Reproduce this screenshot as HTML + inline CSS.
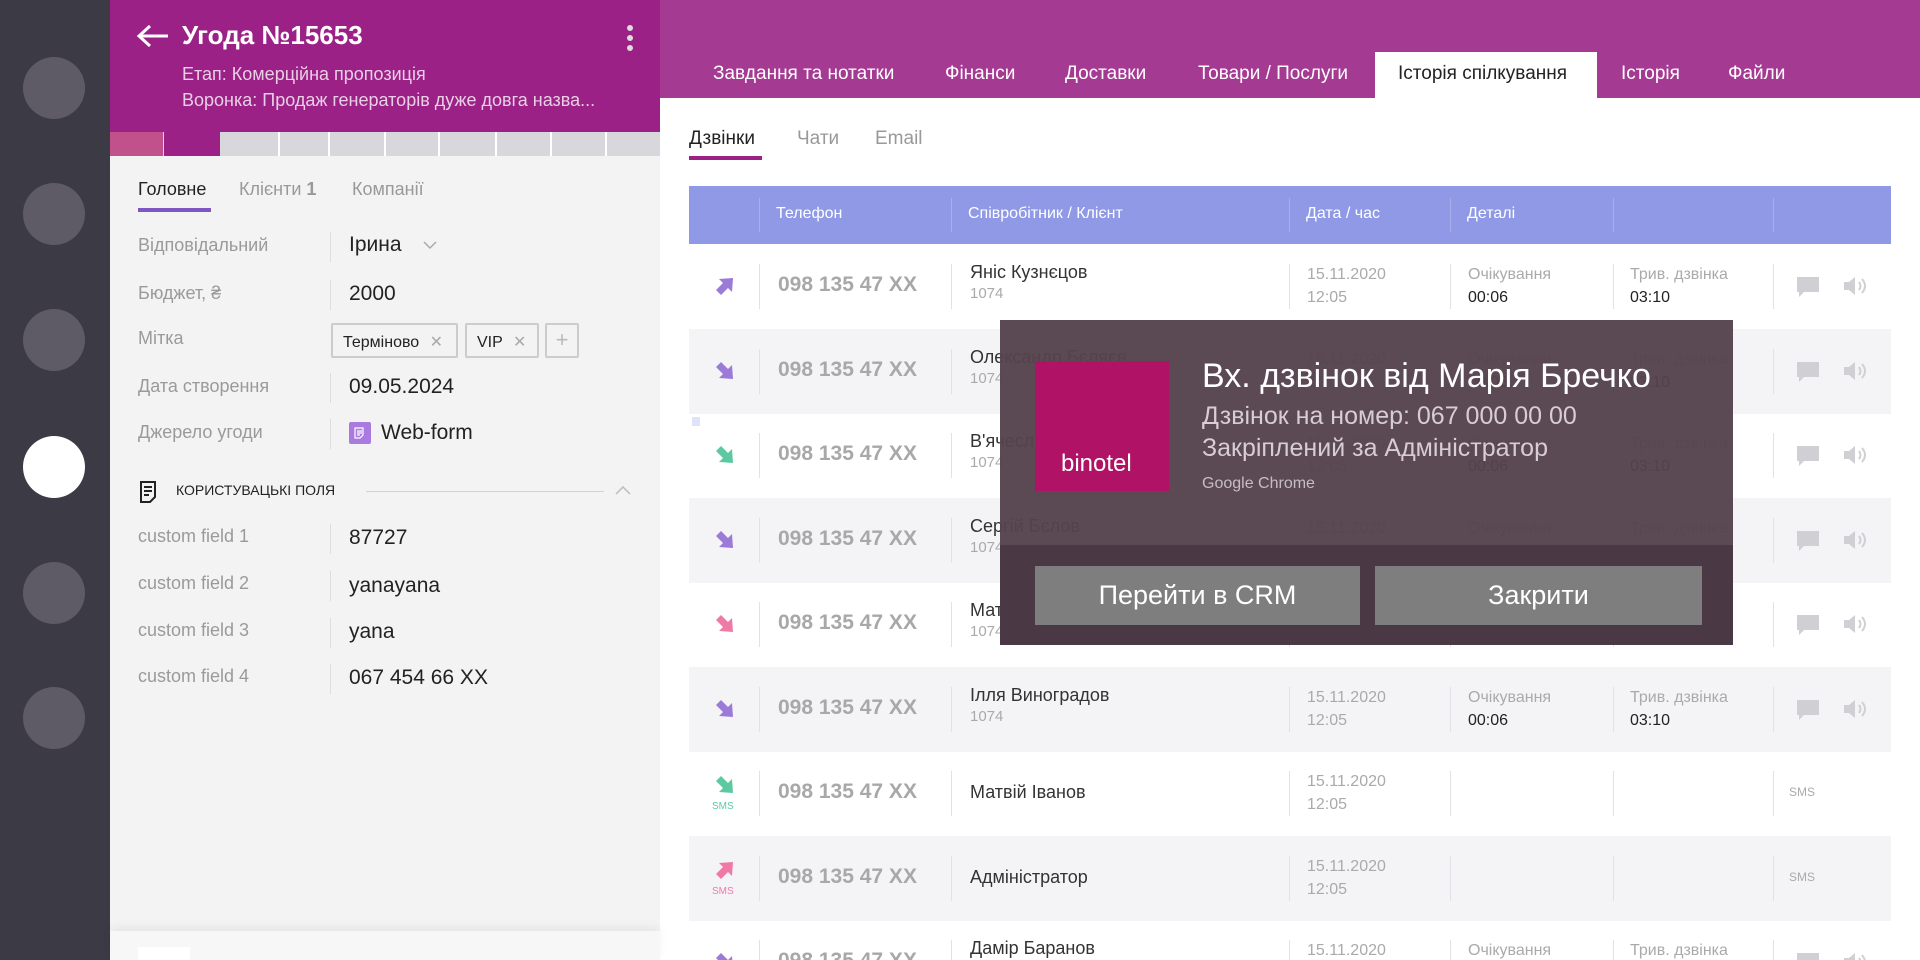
<!DOCTYPE html>
<html><head><meta charset="utf-8"><style>
*{box-sizing:border-box;margin:0;padding:0}
html{width:1920px;height:960px;overflow:hidden}
body{width:1920px;height:960px;overflow:hidden;position:relative;font-family:"Liberation Sans","DejaVu Sans",sans-serif;background:#fff}
.a{position:absolute;white-space:nowrap}
.c{position:absolute;left:23px;width:62px;height:62px;border-radius:50%;background:#5e5b66}
.lbl{position:absolute;left:138px;font-size:18px;color:#9a9a9a}
.val{position:absolute;left:349px;font-size:21px;color:#222}
.sep{position:absolute;left:330px;width:1px;height:30px;background:#ddd}
.tab{position:absolute;top:63px;font-size:19px;color:#fff}
.row{position:absolute;left:689px;width:1202px;height:85px}
.g{background:#f4f4f6}
.vs{position:absolute;width:1px;background:#e2e2e6}
.ph{position:absolute;left:778px;font-size:21px;color:#a8a8a8;font-weight:bold}
.nm{position:absolute;left:970px;font-size:18px;color:#333}
.sm{font-size:15px;color:#aaa;margin-top:2px}
.dt{position:absolute;left:1307px;font-size:16px;color:#aaa;line-height:23px}
.dl{position:absolute;font-size:16px;color:#aaa;line-height:23px}
.dl b{font-weight:normal;color:#222}
</style></head><body>
<div class="a" style="left:0;top:0;width:110px;height:960px;background:#3c3a45"></div>
<div class="c" style="top:57px"></div><div class="c" style="top:183px"></div><div class="c" style="top:309px"></div>
<div class="c" style="top:436px;background:#fff"></div><div class="c" style="top:562px"></div><div class="c" style="top:687px"></div>

<div class="a" style="left:110px;top:0;width:550px;height:960px;background:#f3f3f3"></div>
<div class="a" style="left:110px;top:0;width:550px;height:132px;background:#9c2187"></div>
<svg class="a" style="left:136px;top:24px" width="34" height="24" viewBox="0 0 34 24"><path d="M32 12H4M14 2L3 12l11 10" stroke="#fff" stroke-width="3" fill="none"/></svg>
<div class="a" style="left:182px;top:20px;font-size:26px;color:#fff;font-weight:bold">Угода №15653</div>
<div class="a" style="left:627px;top:25px;width:6px;height:6px;border-radius:50%;background:#ddd;box-shadow:0 10px 0 #ddd,0 20px 0 #ddd"></div>
<div class="a" style="left:182px;top:64px;font-size:18px;color:#e8cfe4">Етап: Комерційна пропозиція</div>
<div class="a" style="left:182px;top:90px;font-size:18px;color:#e8cfe4">Воронка: Продаж генераторів дуже довга назва...</div>
<div class="a" style="left:110px;top:132px;width:550px;height:24px;background:#d8d8dc"></div>
<div class="a" style="left:110px;top:132px;width:53px;height:24px;background:#c0518b"></div>
<div class="a" style="left:164px;top:132px;width:56px;height:24px;background:#9c2187"></div>
<div class="a" style="left:278px;top:132px;width:2px;height:24px;background:#fff"></div><div class="a" style="left:328px;top:132px;width:2px;height:24px;background:#fff"></div><div class="a" style="left:384px;top:132px;width:2px;height:24px;background:#fff"></div><div class="a" style="left:438px;top:132px;width:2px;height:24px;background:#fff"></div><div class="a" style="left:495px;top:132px;width:2px;height:24px;background:#fff"></div><div class="a" style="left:550px;top:132px;width:2px;height:24px;background:#fff"></div><div class="a" style="left:605px;top:132px;width:2px;height:24px;background:#fff"></div>
<div class="a" style="left:138px;top:179px;font-size:18px;color:#222">Головне</div>
<div class="a" style="left:138px;top:208px;width:73px;height:4px;background:#7e57c2"></div>
<div class="a" style="left:239px;top:179px;font-size:18px;color:#999">Клієнти <b>1</b></div>
<div class="a" style="left:352px;top:179px;font-size:18px;color:#999">Компанії</div>

<div class="lbl" style="top:235px">Відповідальний</div><div class="sep" style="top:232px"></div><div class="val" style="top:233px">Ірина</div>
<svg class="a" style="left:422px;top:240px" width="16" height="10"><path d="M2 2l6 6 6-6" stroke="#aaa" stroke-width="1.5" fill="none"/></svg>
<div class="lbl" style="top:283px">Бюджет, ₴</div><div class="sep" style="top:280px"></div><div class="val" style="top:282px">2000</div>
<div class="lbl" style="top:328px">Мітка</div>
<div class="a" style="left:331px;top:323px;width:127px;height:35px;border:2px solid #ccc;border-radius:2px;font-size:16px;color:#222;padding:7px 10px">Терміново <span style="color:#aaa;margin-left:6px">✕</span></div>
<div class="a" style="left:465px;top:323px;width:74px;height:35px;border:2px solid #ccc;border-radius:2px;font-size:16px;color:#222;padding:7px 10px">VIP <span style="color:#aaa;margin-left:6px">✕</span></div>
<div class="a" style="left:545px;top:323px;width:34px;height:35px;border:2px solid #ccc;border-radius:2px;font-size:22px;color:#bbb;text-align:center;line-height:30px">+</div>
<div class="lbl" style="top:376px">Дата створення</div><div class="sep" style="top:373px"></div><div class="val" style="top:375px">09.05.2024</div>
<div class="lbl" style="top:422px">Джерело угоди</div><div class="sep" style="top:419px"></div>
<div class="a" style="left:349px;top:422px;width:22px;height:22px;background:#a97be0;border-radius:2px"></div>
<svg class="a" style="left:354px;top:427px" width="12" height="12"><path d="M1 1h8v7l-3 3H1zM3 4h5M3 6h5M3 8h3" stroke="#fff" stroke-width="1.2" fill="none"/></svg>
<div class="val" style="top:421px;left:381px">Web-form</div>
<svg class="a" style="left:139px;top:480px" width="18" height="24" viewBox="0 0 18 24"><path d="M2 2h14v15l-5 5H2z M5 7h8M5 11h8M5 15h5" stroke="#222" stroke-width="2" fill="none"/></svg>
<div class="a" style="left:176px;top:482px;font-size:14px;color:#222">КОРИСТУВАЦЬКІ ПОЛЯ</div>
<div class="a" style="left:366px;top:491px;width:238px;height:1px;background:#d0d0d8"></div>
<svg class="a" style="left:614px;top:484px" width="18" height="12"><path d="M2 10l7-7 7 7" stroke="#bbb" stroke-width="1.5" fill="none"/></svg>
<div class="lbl" style="top:526px">custom field 1</div><div class="sep" style="top:524px"></div><div class="val" style="top:526px">87727</div>
<div class="lbl" style="top:573px">custom field 2</div><div class="sep" style="top:571px"></div><div class="val" style="top:574px">yanayana</div>
<div class="lbl" style="top:620px">custom field 3</div><div class="sep" style="top:618px"></div><div class="val" style="top:620px">yana</div>
<div class="lbl" style="top:666px">custom field 4</div><div class="sep" style="top:664px"></div><div class="val" style="top:666px">067 454 66 XX</div>
<div class="a" style="left:110px;top:931px;width:550px;height:29px;background:#f7f7f8;box-shadow:0 -4px 8px rgba(0,0,0,.05)"></div>
<div class="a" style="left:138px;top:947px;width:52px;height:13px;background:#fff"></div>

<div class="a" style="left:660px;top:0;width:1260px;height:98px;background:#a53a93"></div>
<div class="a" style="left:1375px;top:52px;width:222px;height:46px;background:#fff"></div>
<div class="tab" style="left:713px">Завдання та нотатки</div>
<div class="tab" style="left:945px">Фінанси</div>
<div class="tab" style="left:1065px">Доставки</div>
<div class="tab" style="left:1198px">Товари / Послуги</div>
<div class="tab" style="left:1398px;color:#222">Історія спілкування</div>
<div class="tab" style="left:1621px">Історія</div>
<div class="tab" style="left:1728px">Файли</div>
<div class="a" style="left:689px;top:128px;font-size:19px;color:#222">Дзвінки</div>
<div class="a" style="left:689px;top:156px;width:73px;height:4px;background:#9c2187"></div>
<div class="a" style="left:797px;top:128px;font-size:19px;color:#999">Чати</div>
<div class="a" style="left:875px;top:128px;font-size:19px;color:#999">Email</div>
<div class="a" style="left:689px;top:186px;width:1202px;height:58px;background:#8f99e6"></div>
<div class="a" style="left:776px;top:205px;font-size:16px;color:#fff">Телефон</div>
<div class="a" style="left:968px;top:205px;font-size:16px;color:#fff">Співробітник / Клієнт</div>
<div class="a" style="left:1306px;top:205px;font-size:16px;color:#fff">Дата / час</div>
<div class="a" style="left:1467px;top:205px;font-size:16px;color:#fff">Деталі</div>
<div id="rows" style="position:absolute;left:0;top:0;width:1920px;height:960px;overflow:hidden"></div>
<script>
var rows=[
[1,"#9b7ad8","Яніс Кузнєцов",1,0],
[0,"#9b7ad8","Олександр Бєляєв",1,1],
[0,"#5dc9a0","В'ячеслав",1,0],
[0,"#9b7ad8","Сергій Бєлов",1,1],
[0,"#f07aa6","Матвій",1,0],
[0,"#9b7ad8","Ілля Виноградов",1,1],
[0,"#5dc9a0","Матвій Іванов",0,0],
[1,"#f07aa6","Адміністратор",0,1],
[0,"#9b7ad8","Дамір Баранов",1,0]];
var h='';
var xs=[759,951,1289,1450,1613,1773];
h+='<div class="a" style="left:689px;top:186px">'+xs.map(function(x){return '<div class="vs" style="left:'+(x-689)+'px;top:12px;height:34px;background:#a7aeea"></div>'}).join('')+'</div>';
rows.forEach(function(r,i){
 var t=244+i*84.5;
 h+='<div class="row '+(r[4]?'g':'')+'" style="top:'+t+'px">';
 xs.forEach(function(x){h+='<div class="vs" style="left:'+(x-689)+'px;top:20px;height:45px"></div>'});
 h+='</div>';
 var m=t+42;
 var ay=r[3]?m-12:m-20;
 h+='<svg class="a" style="left:713px;top:'+ay+'px" width="24" height="24" viewBox="0 0 24 24"><g'+(r[0]?' transform="translate(0 24) scale(1 -1)"':'')+'><path d="M3 8L8 3L15 10L19 6L20 20L6 19L10 15Z" fill="'+r[1]+'"/></g></svg>';
 if(!r[3])h+='<div class="a" style="left:712px;top:'+(m+8)+'px;font-size:10px;color:'+r[1]+'">SMS</div>';
 h+='<div class="ph" style="top:'+(m-13)+'px">098 135 47 XX</div>';
 if(r[3]){h+='<div class="nm" style="top:'+(m-24)+'px">'+r[2]+'<div class="sm">1074</div></div>';
  h+='<div class="dl" style="left:1468px;top:'+(m-23)+'px">Очікування<br><b>00:06</b></div>';
  h+='<div class="dl" style="left:1630px;top:'+(m-23)+'px">Трив. дзвінка<br><b>03:10</b></div>';
  h+='<svg class="a" style="left:1796px;top:'+(m-10)+'px" width="24" height="22"><path d="M1 1h22v15H8l-5 5v-5H1z" fill="#d0d0d4"/></svg>';
  h+='<svg class="a" style="left:1842px;top:'+(m-11)+'px" width="26" height="22"><path d="M2 7h5l6-5v18l-6-5H2z" fill="#d0d0d4"/><path d="M17 7q3 4 0 8M20 4q6 7 0 14" stroke="#d0d0d4" stroke-width="2" fill="none"/></svg>';
 } else {h+='<div class="nm" style="top:'+(m-11)+'px">'+r[2]+'</div>';
  h+='<div class="a" style="left:1789px;top:'+(m-8)+'px;font-size:12px;color:#aaa">SMS</div>';}
 h+='<div class="dt" style="top:'+(m-23)+'px">15.11.2020<br>12:05</div>';
});
document.getElementById('rows').innerHTML=h;
</script>
<div class="a" style="left:692px;top:417px;width:8px;height:9px;background:#dfe3fa"></div>
<div class="a" style="left:1000px;top:320px;width:733px;height:325px;background:rgba(84,66,77,.96)"></div>
<div class="a" style="left:1000px;top:545px;width:733px;height:100px;background:#4a3944"></div>
<div class="a" style="left:1035px;top:361px;width:134px;height:130px;background:#b01265"></div>
<div class="a" style="left:1061px;top:450px;font-size:24px;color:#fff">binotel</div>
<div class="a" style="left:1202px;top:357px;font-size:34px;color:#fff">Вх. дзвінок від Марія Бречко</div>
<div class="a" style="left:1202px;top:402px;font-size:25px;color:#d8cdd3">Дзвінок на номер: 067 000 00 00</div>
<div class="a" style="left:1202px;top:434px;font-size:25px;color:#d8cdd3">Закріплений за Адміністратор</div>
<div class="a" style="left:1202px;top:475px;font-size:16px;color:#c8bcc3">Google Chrome</div>
<div class="a" style="left:1035px;top:566px;width:325px;height:59px;background:#7e7e7e;color:#fff;font-size:27px;text-align:center;line-height:59px">Перейти в CRM</div>
<div class="a" style="left:1375px;top:566px;width:327px;height:59px;background:#7e7e7e;color:#fff;font-size:27px;text-align:center;line-height:59px">Закрити</div>
</body></html>
